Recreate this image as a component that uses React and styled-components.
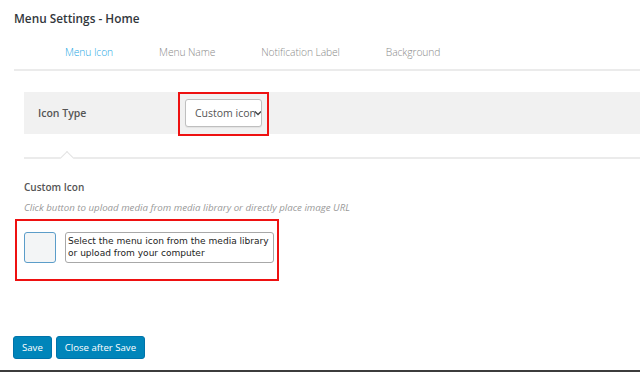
import React from "react";
import styled, { createGlobalStyle } from "styled-components";

const Global = createGlobalStyle`
  html, body { margin: 0; padding: 0; background: #fff; }
  body { font-family: "Open Sans", "Noto Sans", sans-serif; color: #23282d; }
  * { box-sizing: border-box; }
`;

const Page = styled.div`
  width: 640px;
  height: 372px;
  display: flex;
  flex-direction: column;
  overflow: hidden;
`;

const Title = styled.h1`
  margin: 9px 0 0 14px;
  font-size: 11.8px;
  line-height: 18px;
  font-weight: 600;
  color: #32373c;
`;

const TabBar = styled.nav`
  margin: 7px 0 0 14px;
  height: 37px;
  border-bottom: 2px solid #ebebeb;
  display: flex;
  align-items: center;
  gap: 46px;
  padding-left: 51px;
`;

const Tab = styled.span`
  font-size: 10.3px;
  font-weight: 300;
  color: ${(p) => (p.$active ? "#1ea7e4" : "#8a8a8a")};
  letter-spacing: -0.1px;
`;

const Content = styled.div`
  margin-left: 24px;
  display: flex;
  flex-direction: column;
`;

const FieldRow = styled.div`
  margin-top: 21px;
  height: 42px;
  background: #f1f1f1;
  display: flex;
  align-items: center;
  padding-left: 14px;
`;

const FieldLabel = styled.label`
  width: 147px;
  font-size: 10.5px;
  font-weight: 600;
  color: #555;
`;

const Marked = styled.span`
  position: relative;
  display: inline-flex;
  &::after {
    content: "";
    position: absolute;
    left: -${(p) => p.$l}px;
    top: -${(p) => p.$t}px;
    right: -${(p) => p.$r}px;
    bottom: -${(p) => p.$b}px;
    border: 2px solid #ee1111;
    pointer-events: none;
  }
`;

const UploadMarked = styled(Marked)`
  align-self: flex-start;
  margin-top: 17px;
`;

const Select = styled.div`
  width: 77px;
  height: 28px;
  background: #fff;
  border: 1px solid #bfbfbf;
  border-radius: 3px;
  box-shadow: 0 1px 1px rgba(0, 0, 0, 0.06);
  display: flex;
  align-items: center;
  padding-left: 9px;
  font-size: 10.5px;
  color: #555;
  white-space: nowrap;
  overflow: hidden;
  svg { margin-left: -2px; flex: none; }
`;

const Divider = styled.div`
  position: relative;
  margin-top: 23px;
  height: 1px;
  border-top: 2px solid #ebebeb;
  &::before {
    content: "";
    position: absolute;
    left: 38px;
    top: -6px;
    width: 9px;
    height: 9px;
    background: #fff;
    border-top: 1.5px solid #e3e3e3;
    border-left: 1.5px solid #e3e3e3;
    transform: rotate(45deg);
  }
`;

const SectionTitle = styled.div`
  margin-top: 21px;
  font-size: 10px;
  line-height: 14px;
  font-weight: 600;
  color: #555;
`;

const Hint = styled.div`
  margin-top: 7px;
  font-size: 9.7px;
  line-height: 14px;
  font-style: italic;
  color: #999;
  white-space: nowrap;
`;

const UploadRow = styled.div`
  display: flex;
  gap: 9px;
`;

const IconBox = styled.div`
  width: 32px;
  height: 31px;
  background: #f3f5f6;
  border: 1px solid #5b9dc9;
  border-radius: 3px;
  flex: none;
`;

const TextBox = styled.div`
  width: 209px;
  height: 31px;
  border: 1px solid #a8a8a8;
  border-radius: 3px;
  padding: 2px 2px 0;
  font-family: "DejaVu Sans", Verdana, sans-serif;
  font-size: 9.05px;
  line-height: 12px;
  color: #222;
`;

const Actions = styled.div`
  margin: 73px 0 0 13px;
  display: flex;
  gap: 4px;
`;

const Button = styled.button`
  height: 23px;
  padding: 0 8px;
  background: #0085ba;
  border: 1px solid #0073aa;
  border-radius: 3px;
  color: #fff;
  font-family: "Open Sans", "Noto Sans", sans-serif;
  font-size: 9.6px;
  cursor: pointer;
`;

const BottomBar = styled.div`
  margin-top: auto;
  height: 2px;
  background: #3c3c3c;
`;

export default function App() {
  return (
    <>
      <Global />
      <Page>
        <Title>Menu Settings - Home</Title>
        <TabBar>
          <Tab $active>Menu Icon</Tab>
          <Tab>Menu Name</Tab>
          <Tab>Notification Label</Tab>
          <Tab>Background</Tab>
        </TabBar>
        <Content>
          <FieldRow>
            <FieldLabel>Icon Type</FieldLabel>
            <Marked $l={7} $t={7} $r={7} $b={9}>
              <Select>
                Custom icon
                <svg width="8" height="6" viewBox="0 0 8 6">
                  <path d="M1 1.5 L4 4.5 L7 1.5" fill="none" stroke="#444" strokeWidth="1.3" />
                </svg>
              </Select>
            </Marked>
          </FieldRow>
          <Divider />
          <SectionTitle>Custom Icon</SectionTitle>
          <Hint>Click button to upload media from media library or directly place image URL</Hint>
          <UploadMarked $l={9} $t={13} $r={5} $b={18}>
            <UploadRow>
              <IconBox />
              <TextBox>
                Select the menu icon from the media library or upload from your computer
              </TextBox>
            </UploadRow>
          </UploadMarked>
        </Content>
        <Actions>
          <Button>Save</Button>
          <Button>Close after Save</Button>
        </Actions>
        <BottomBar />
      </Page>
    </>
  );
}
